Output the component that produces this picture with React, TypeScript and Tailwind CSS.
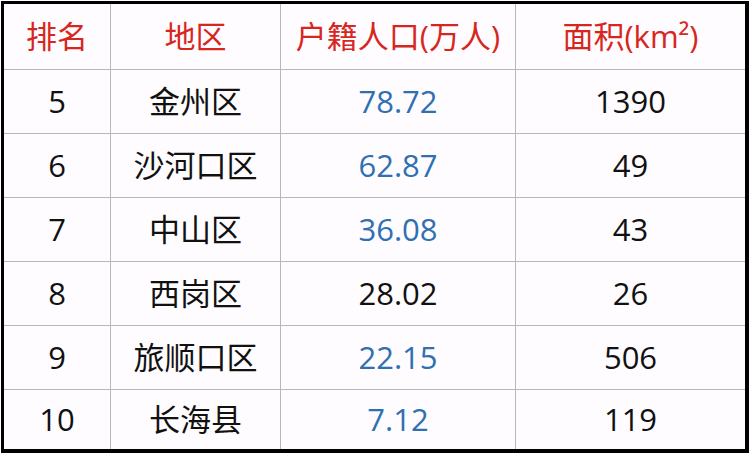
import React from "react";

const rows: { rank: string; area: string; pop: string; popBlue: boolean; size: string }[] = [
  { rank: "5", area: "金州区", pop: "78.72", popBlue: true, size: "1390" },
  { rank: "6", area: "沙河口区", pop: "62.87", popBlue: true, size: "49" },
  { rank: "7", area: "中山区", pop: "36.08", popBlue: true, size: "43" },
  { rank: "8", area: "西岗区", pop: "28.02", popBlue: false, size: "26" },
  { rank: "9", area: "旅顺口区", pop: "22.15", popBlue: true, size: "506" },
  { rank: "10", area: "长海县", pop: "7.12", popBlue: true, size: "119" },
];

export default function App() {
  const font = { fontFamily: '"Open Sans", "Noto Sans CJK SC", sans-serif' };
  const cell = "flex items-center justify-center border-[#b8b6b8]";
  return (
    <div className="w-[752px] h-[456px] bg-white pl-[1px] pt-[1px]" style={font}>
      <div className="w-[748px] h-[452px] border-t-[3px] border-l-[3px] border-r-4 border-b-4 border-black bg-[#fefcfe]">
        <div className="grid grid-cols-[107px_170px_235px_229px] grid-rows-[66px_64px_64px_64px_64px_64px_59px] h-full text-[31px] leading-none">
          <div className={`${cell} border-r border-b text-[#d7261e]`}>排名</div>
          <div className={`${cell} border-r border-b text-[#d7261e]`}>地区</div>
          <div className={`${cell} border-r border-b text-[#d7261e]`}>户籍人口(万人)</div>
          <div className={`${cell} border-b text-[#d7261e]`}>面积(km²)</div>
          {rows.map((r, i) => {
            const last = i === rows.length - 1;
            const b = last ? "" : "border-b";
            return (
              <React.Fragment key={r.rank}>
                <div className={`${cell} border-r ${b} text-[#111]`}>{r.rank}</div>
                <div className={`${cell} border-r ${b} text-[#111]`}>{r.area}</div>
                <div className={`${cell} border-r ${b} ${r.popBlue ? "text-[#2e70b2]" : "text-[#111]"}`}>{r.pop}</div>
                <div className={`${cell} ${b} text-[#111]`}>{r.size}</div>
              </React.Fragment>
            );
          })}
        </div>
      </div>
    </div>
  );
}
